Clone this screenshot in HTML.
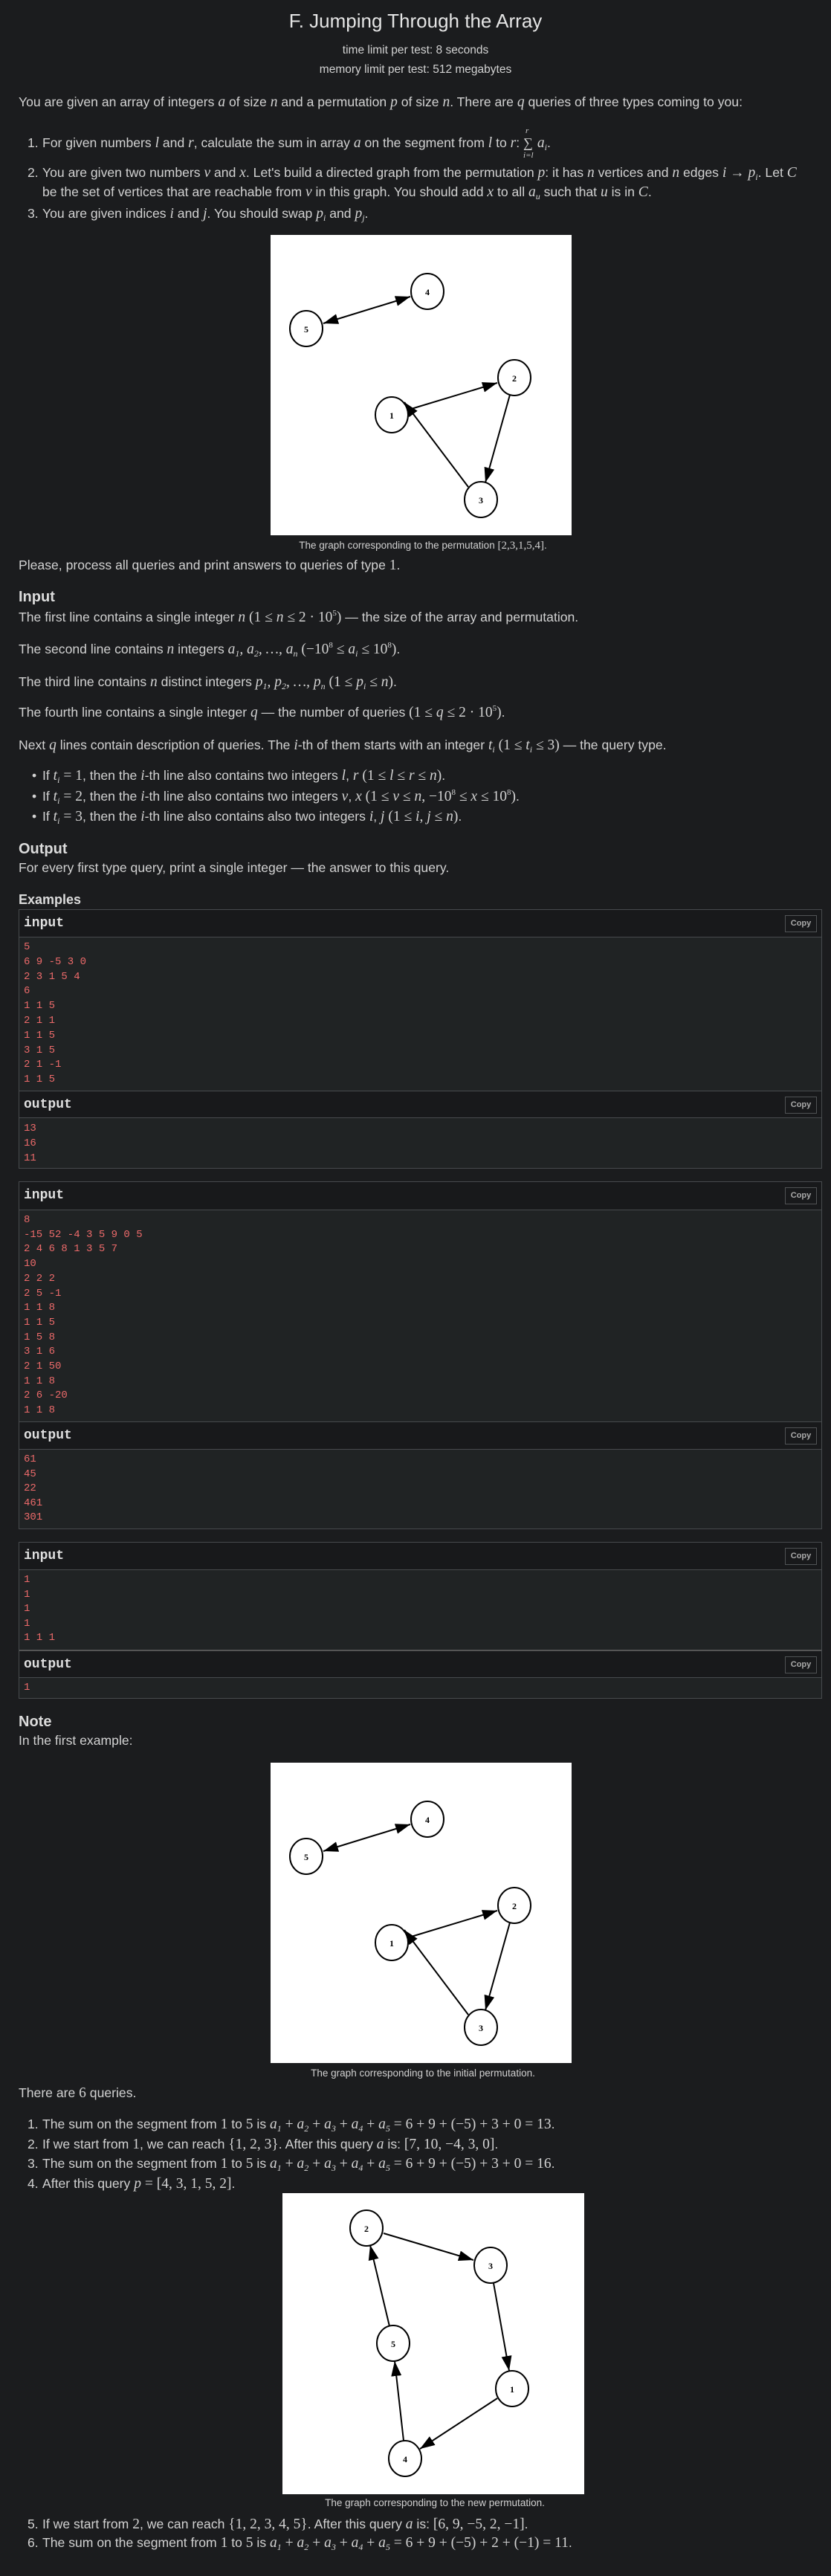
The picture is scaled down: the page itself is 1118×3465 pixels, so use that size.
<!DOCTYPE html>
<html><head><meta charset="utf-8">
<style>
*{margin:0;padding:0;box-sizing:border-box}
body{width:1118px;height:3465px;background:#1b1c1e;color:#d2d2d2;font-family:"Liberation Sans",sans-serif;font-size:17.6px;position:relative;overflow:hidden}
.l{position:absolute;left:25px;white-space:nowrap;line-height:22px;height:22px}
.c{position:absolute;left:0;width:1118px;text-align:center;white-space:nowrap}
.m{font-family:"Liberation Serif",serif;font-style:italic;font-size:19.5px}
.n{font-family:"Liberation Serif",serif;font-size:19.5px}
.h{font-weight:bold;font-size:20px;color:#dcdcdc}
.num{position:absolute;left:-20px}
.sec{position:absolute;left:25px;width:1081px;border:1px solid #474a4d}
.hd{background:#18191b;font-family:"Liberation Mono",monospace;font-weight:bold;font-size:18px;color:#e0e0e0;padding-left:6px;position:relative}
.bd{background:#202324;font-family:"Liberation Mono",monospace;font-size:14px;color:#ec6a6a;padding-left:6px;padding-top:4px;white-space:pre}
.cp{position:absolute;right:6px;top:7px;width:43px;height:23px;border:1px solid #505355;font-size:11px;color:#aaa;font-family:"Liberation Sans",sans-serif;font-weight:bold;text-align:center;line-height:21px}
.cap{font-size:13.5px;color:#d0d0d0}
svg.g{position:absolute;background:#fff}
sub{font-size:12px;line-height:0;vertical-align:-4px}
sup{font-size:11px;line-height:0;vertical-align:8px}
</style></head><body>

<div class="c" style="top:12px;font-size:26px;line-height:32px;color:#e4e4e4">F. Jumping Through the Array</div>
<div class="c" style="top:59px;font-size:15.5px;line-height:18px">time limit per test: 8 seconds</div>
<div class="c" style="top:85px;font-size:15.5px;line-height:18px">memory limit per test: 512 megabytes</div>

<div class="l" style="top:126px">You are given an array of integers <span class="m">a</span> of size <span class="m">n</span> and a permutation <span class="m">p</span> of size <span class="m">n</span>. There are <span class="m">q</span> queries of three types coming to you:</div>

<div class="l" style="top:181px;left:57px"><span class="num">1.</span>For given numbers <span class="m">l</span> and <span class="m">r</span>, calculate the sum in array <span class="m">a</span> on the segment from <span class="m">l</span> to <span class="m">r</span>: <span style="display:inline-block;position:relative;width:14px"><span class="n" style="font-size:18px">∑</span><span class="m" style="position:absolute;left:3px;top:-16px;font-size:11px">r</span><span class="m" style="position:absolute;left:0;top:17px;font-size:11px">i=l</span></span> <span class="m">a<sub>i</sub></span>.</div>
<div class="l" style="top:221px;left:57px"><span class="num">2.</span>You are given two numbers <span class="m">v</span> and <span class="m">x</span>. Let's build a directed graph from the permutation <span class="m">p</span>: it has <span class="m">n</span> vertices and <span class="m">n</span> edges <span class="m">i</span> <span class="n">→</span> <span class="m">p<sub>i</sub></span>. Let <span class="m">C</span></div>
<div class="l" style="top:247px;left:57px">be the set of vertices that are reachable from <span class="m">v</span> in this graph. You should add <span class="m">x</span> to all <span class="m">a<sub>u</sub></span> such that <span class="m">u</span> is in <span class="m">C</span>.</div>
<div class="l" style="top:276px;left:57px"><span class="num">3.</span>You are given indices <span class="m">i</span> and <span class="m">j</span>. You should swap <span class="m">p<sub>i</sub></span> and <span class="m">p<sub>j</sub></span>.</div>

<svg class="g" style="left:364px;top:316px" width="405" height="404" viewBox="0 0 405 404">
<defs><marker id="a" markerUnits="userSpaceOnUse" markerWidth="20" markerHeight="14" refX="20" refY="7" orient="auto-start-reverse"><path d="M0,0L20,7L0,14z" fill="#000"/></marker></defs>
<g stroke="#000" stroke-width="2" fill="none">
<line x1="186" y1="235" x2="305" y2="199" marker-end="url(#a)"/>
<line x1="322" y1="215" x2="289" y2="333" marker-end="url(#a)"/>
<line x1="266" y1="339" x2="180" y2="225" marker-end="url(#a)"/>
<line x1="71" y1="119" x2="188" y2="83" marker-end="url(#a)" marker-start="url(#a)"/>
<ellipse cx="163" cy="242" rx="22" ry="24"/><ellipse cx="328" cy="192" rx="22" ry="24"/><ellipse cx="283" cy="356" rx="22" ry="24"/><ellipse cx="211" cy="76" rx="22" ry="24"/><ellipse cx="48" cy="126" rx="22" ry="24"/>
</g>
<g font-family="Liberation Serif,serif" font-weight="bold" font-size="12" text-anchor="middle">
<text x="163" y="247">1</text><text x="328" y="197">2</text><text x="283" y="361">3</text><text x="211" y="81">4</text><text x="48" y="131">5</text></g>
</svg>
<div class="c cap" style="top:726px;left:10px">The graph corresponding to the permutation <span class="n" style="font-size:15px">[2,3,1,5,4]</span>.</div>

<div class="l" style="top:749px">Please, process all queries and print answers to queries of type <span class="n">1</span>.</div>
<div class="l h" style="top:792px">Input</div>
<div class="l" style="top:819px">The first line contains a single integer <span class="m">n</span> <span class="n">(1 ≤ <i>n</i> ≤ 2 · 10<sup>5</sup>)</span> — the size of the array and permutation.</div>
<div class="l" style="top:862px">The second line contains <span class="m">n</span> integers <span class="m">a<sub>1</sub>, a<sub>2</sub>, …, a<sub>n</sub></span> <span class="n">(−10<sup>8</sup> ≤ <i>a<sub>i</sub></i> ≤ 10<sup>8</sup>)</span>.</div>
<div class="l" style="top:906px">The third line contains <span class="m">n</span> distinct integers <span class="m">p<sub>1</sub>, p<sub>2</sub>, …, p<sub>n</sub></span> <span class="n">(1 ≤ <i>p<sub>i</sub></i> ≤ <i>n</i>)</span>.</div>
<div class="l" style="top:947px">The fourth line contains a single integer <span class="m">q</span> — the number of queries <span class="n">(1 ≤ <i>q</i> ≤ 2 · 10<sup>5</sup>)</span>.</div>
<div class="l" style="top:991px">Next <span class="m">q</span> lines contain description of queries. The <span class="m">i</span>-th of them starts with an integer <span class="m">t<sub>i</sub></span> <span class="n">(1 ≤ <i>t<sub>i</sub></i> ≤ 3)</span> — the query type.</div>
<div class="l" style="top:1032px;left:57px"><span class="num" style="left:-14px">•</span>If <span class="m">t<sub>i</sub></span> <span class="n">= 1</span>, then the <span class="m">i</span>-th line also contains two integers <span class="m">l</span>, <span class="m">r</span> <span class="n">(1 ≤ <i>l</i> ≤ <i>r</i> ≤ <i>n</i>)</span>.</div>
<div class="l" style="top:1060px;left:57px"><span class="num" style="left:-14px">•</span>If <span class="m">t<sub>i</sub></span> <span class="n">= 2</span>, then the <span class="m">i</span>-th line also contains two integers <span class="m">v</span>, <span class="m">x</span> <span class="n">(1 ≤ <i>v</i> ≤ <i>n</i>, −10<sup>8</sup> ≤ <i>x</i> ≤ 10<sup>8</sup>)</span>.</div>
<div class="l" style="top:1087px;left:57px"><span class="num" style="left:-14px">•</span>If <span class="m">t<sub>i</sub></span> <span class="n">= 3</span>, then the <span class="m">i</span>-th line also contains also two integers <span class="m">i</span>, <span class="m">j</span> <span class="n">(1 ≤ <i>i</i>, <i>j</i> ≤ <i>n</i>)</span>.</div>
<div class="l h" style="top:1131px">Output</div>
<div class="l" style="top:1156px">For every first type query, print a single integer — the answer to this query.</div>
<div class="l h" style="top:1199px;font-size:18px">Examples</div>

<div class="sec" style="top:1223px;height:349px">
<div class="hd" style="height:37px;line-height:36px;border-bottom:1px solid #474a4d">input<div class="cp">Copy</div></div>
<div class="bd" style="height:206px;line-height:19.8px">5
6 9 -5 3 0
2 3 1 5 4
6
1 1 5
2 1 1
1 1 5
3 1 5
2 1 -1
1 1 5</div>
<div class="hd" style="height:37px;line-height:36px;border-top:1px solid #474a4d;border-bottom:1px solid #474a4d">output<div class="cp">Copy</div></div>
<div class="bd" style="height:67px;line-height:20px">13
16
11</div>
</div>

<div class="sec" style="top:1589px;height:468px">
<div class="hd" style="height:38px;line-height:37px;border-bottom:1px solid #474a4d">input<div class="cp">Copy</div></div>
<div class="bd" style="height:284px;line-height:19.7px">8
-15 52 -4 3 5 9 0 5
2 4 6 8 1 3 5 7
10
2 2 2
2 5 -1
1 1 8
1 1 5
1 5 8
3 1 6
2 1 50
1 1 8
2 6 -20
1 1 8</div>
<div class="hd" style="height:38px;line-height:37px;border-top:1px solid #474a4d;border-bottom:1px solid #474a4d">output<div class="cp">Copy</div></div>
<div class="bd" style="height:106px;line-height:19.6px">61
45
22
461
301</div>
</div>

<div class="sec" style="top:2074px;height:211px">
<div class="hd" style="height:37px;line-height:36px;border-bottom:1px solid #474a4d">input<div class="cp">Copy</div></div>
<div class="bd" style="height:107px;line-height:19.6px">1
1
1
1
1 1 1</div>
<div class="hd" style="height:38px;line-height:37px;border-top:2px solid #555;border-bottom:1px solid #474a4d">output<div class="cp">Copy</div></div>
<div class="bd" style="height:27px;line-height:19px">1</div>
</div>

<div class="l h" style="top:2305px">Note</div>
<div class="l" style="top:2330px">In the first example:</div>

<svg class="g" style="left:364px;top:2371px" width="405" height="404" viewBox="0 0 405 404">
<defs><marker id="b" markerUnits="userSpaceOnUse" markerWidth="20" markerHeight="14" refX="20" refY="7" orient="auto-start-reverse"><path d="M0,0L20,7L0,14z" fill="#000"/></marker></defs>
<g stroke="#000" stroke-width="2" fill="none">
<line x1="186" y1="235" x2="305" y2="199" marker-end="url(#b)"/>
<line x1="322" y1="215" x2="289" y2="333" marker-end="url(#b)"/>
<line x1="266" y1="339" x2="180" y2="225" marker-end="url(#b)"/>
<line x1="71" y1="119" x2="188" y2="83" marker-end="url(#b)" marker-start="url(#b)"/>
<ellipse cx="163" cy="242" rx="22" ry="24"/><ellipse cx="328" cy="192" rx="22" ry="24"/><ellipse cx="283" cy="356" rx="22" ry="24"/><ellipse cx="211" cy="76" rx="22" ry="24"/><ellipse cx="48" cy="126" rx="22" ry="24"/>
</g>
<g font-family="Liberation Serif,serif" font-weight="bold" font-size="12" text-anchor="middle">
<text x="163" y="247">1</text><text x="328" y="197">2</text><text x="283" y="361">3</text><text x="211" y="81">4</text><text x="48" y="131">5</text></g>
</svg>
<div class="c cap" style="top:2781px;left:10px">The graph corresponding to the initial permutation.</div>

<div class="l" style="top:2804px">There are <span class="n">6</span> queries.</div>
<div class="l" style="top:2846px;left:57px"><span class="num">1.</span>The sum on the segment from <span class="n">1</span> to <span class="n">5</span> is <span class="m">a<sub>1</sub></span> <span class="n">+</span> <span class="m">a<sub>2</sub></span> <span class="n">+</span> <span class="m">a<sub>3</sub></span> <span class="n">+</span> <span class="m">a<sub>4</sub></span> <span class="n">+</span> <span class="m">a<sub>5</sub></span> <span class="n">= 6 + 9 + (−5) + 3 + 0 = 13</span>.</div>
<div class="l" style="top:2873px;left:57px"><span class="num">2.</span>If we start from <span class="n">1</span>, we can reach <span class="n">{1, 2, 3}</span>. After this query <span class="m">a</span> is: <span class="n">[7, 10, −4, 3, 0]</span>.</div>
<div class="l" style="top:2899px;left:57px"><span class="num">3.</span>The sum on the segment from <span class="n">1</span> to <span class="n">5</span> is <span class="m">a<sub>1</sub></span> <span class="n">+</span> <span class="m">a<sub>2</sub></span> <span class="n">+</span> <span class="m">a<sub>3</sub></span> <span class="n">+</span> <span class="m">a<sub>4</sub></span> <span class="n">+</span> <span class="m">a<sub>5</sub></span> <span class="n">= 6 + 9 + (−5) + 3 + 0 = 16</span>.</div>
<div class="l" style="top:2926px;left:57px"><span class="num">4.</span>After this query <span class="m">p</span> <span class="n">= [4, 3, 1, 5, 2]</span>.</div>

<svg class="g" style="left:380px;top:2950px" width="406" height="405" viewBox="0 0 406 405">
<defs><marker id="c" markerUnits="userSpaceOnUse" markerWidth="20" markerHeight="14" refX="20" refY="7" orient="auto"><path d="M0,0L20,7L0,14z" fill="#000"/></marker></defs>
<g stroke="#000" stroke-width="2" fill="none">
<line x1="136" y1="54" x2="257" y2="90" marker-end="url(#c)"/>
<line x1="284" y1="121" x2="305" y2="239" marker-end="url(#c)"/>
<line x1="289" y1="276" x2="185" y2="344" marker-end="url(#c)"/>
<line x1="163" y1="333" x2="151" y2="226" marker-end="url(#c)"/>
<line x1="144" y1="179" x2="118" y2="70" marker-end="url(#c)"/>
<ellipse cx="309" cy="263" rx="22" ry="24"/><ellipse cx="113" cy="47" rx="22" ry="24"/><ellipse cx="280" cy="97" rx="22" ry="24"/><ellipse cx="165" cy="357" rx="22" ry="24"/><ellipse cx="149" cy="202" rx="22" ry="24"/>
</g>
<g font-family="Liberation Serif,serif" font-weight="bold" font-size="12" text-anchor="middle">
<text x="309" y="268">1</text><text x="113" y="52">2</text><text x="280" y="102">3</text><text x="165" y="362">4</text><text x="149" y="207">5</text></g>
</svg>
<div class="c cap" style="top:3359px;left:26px">The graph corresponding to the new permutation.</div>

<div class="l" style="top:3384px;left:57px"><span class="num">5.</span>If we start from <span class="n">2</span>, we can reach <span class="n">{1, 2, 3, 4, 5}</span>. After this query <span class="m">a</span> is: <span class="n">[6, 9, −5, 2, −1]</span>.</div>
<div class="l" style="top:3409px;left:57px"><span class="num">6.</span>The sum on the segment from <span class="n">1</span> to <span class="n">5</span> is <span class="m">a<sub>1</sub></span> <span class="n">+</span> <span class="m">a<sub>2</sub></span> <span class="n">+</span> <span class="m">a<sub>3</sub></span> <span class="n">+</span> <span class="m">a<sub>4</sub></span> <span class="n">+</span> <span class="m">a<sub>5</sub></span> <span class="n">= 6 + 9 + (−5) + 2 + (−1) = 11</span>.</div>

</body></html>
